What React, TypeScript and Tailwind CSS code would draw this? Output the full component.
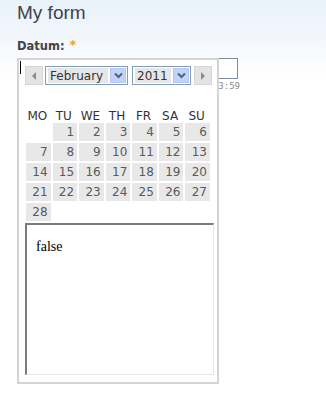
import React from 'react';

const days = ['MO', 'TU', 'WE', 'TH', 'FR', 'SA', 'SU'];
const cells: (number | null)[] = [null, ...Array.from({ length: 28 }, (_, i) => i + 1)];

function NavButton({ dir }: { dir: 'prev' | 'next' }) {
  return (
    <div className="w-[18px] h-[19px] bg-[#e4e4e4] border border-[#d6d6d6] flex items-center justify-center">
      <svg width="6" height="8" viewBox="0 0 6 8">
        {dir === 'prev' ? <polygon points="5,0 5,8 1,4" fill="#8c8c8c" /> : <polygon points="1,0 1,8 5,4" fill="#8c8c8c" />}
      </svg>
    </div>
  );
}

function FakeSelect({ label, width }: { label: string; width: string }) {
  return (
    <div className={`${width} h-[19px] border border-[#7f9db9] bg-white flex items-center pl-[2px] pr-[1px] gap-[2px]`}>
      <div className="flex-1 h-[15px] bg-[#e6e6e6] flex items-center pl-[2px] text-[12px] text-[#333] leading-none">{label}</div>
      <div className="w-[16px] h-[15px] bg-[#c3d3f6] border border-[#b4c6ee] flex items-center justify-center">
        <svg width="9" height="7" viewBox="0 0 9 7">
          <polyline points="1,1.5 4.5,5 8,1.5" fill="none" stroke="#4d6185" strokeWidth="2" />
        </svg>
      </div>
    </div>
  );
}

export default function App() {
  return (
    <div
      className="w-[326px] h-[410px] bg-[linear-gradient(to_bottom,#e9f1f9_0px,#f6f9fd_50px,#ffffff_80px)] text-[#444] overflow-hidden"
      style={{ fontFamily: '"DejaVu Sans", Verdana, sans-serif' }}
    >
      <div className="pl-[17px] pt-[1px]">
        <h1 className="text-[19px] leading-[24px] text-[#3f4448]" style={{ fontFamily: '"Liberation Sans", Arial, sans-serif' }}>
          My form
        </h1>
        <div className="mt-[13px] flex items-start gap-[5px] h-[20px]">
          <span className="text-[11.5px] font-bold text-[#444] leading-[16px]">Datum:</span>
          <span className="text-[13px] text-[#f0a020] font-bold leading-[14px]">*</span>
        </div>

        <div className="relative">
          <div className="w-[221px] h-[21px] border border-[#7f8d9b] bg-white" />
          <div className="w-[223px] flex justify-end text-[9px] text-[#888] leading-[12px] mt-[1px]" style={{ fontFamily: '"DejaVu Sans Mono", monospace' }}>
            2011-02-03 23:59
          </div>

          {/* popup calendar */}
          <div className="absolute left-0 top-0 w-[202px] h-[326px] bg-white border-2 border-[#d4d4d4] flex flex-col items-start pl-[6px] pt-[6px]">
            <div className="absolute left-[1px] top-[1px] w-[1px] h-[13px] bg-black" />
            <div className="flex items-center h-[19px]">
              <NavButton dir="prev" />
              <div className="w-[2px]" />
              <FakeSelect label="February" width="w-[83px]" />
              <div className="w-[4px]" />
              <FakeSelect label="2011" width="w-[59px]" />
              <div className="w-[3px]" />
              <NavButton dir="next" />
            </div>

            <div className="ml-[1px] mt-[24px] w-[184px] grid grid-cols-7 gap-x-[2px] h-[14px] items-center text-[12px] leading-none text-[#333]">
              {days.map((d) => (
                <div key={d} className="text-center pr-[2px]">{d}</div>
              ))}
            </div>

            <div className="ml-[1px] w-[184px] grid grid-cols-7 gap-[2px] text-[12px] text-[#5a5a5a]">
              {cells.map((c, i) => (
                <div
                  key={i}
                  className={`h-[18px] flex items-center justify-end pr-[3px] leading-none ${c ? 'bg-[#e8e8e8]' : ''}`}
                >
                  {c}
                </div>
              ))}
            </div>

            <div
              className="mt-[2px] w-[189px] h-[152px] border-t-2 border-l-2 border-t-[#7c7c74] border-l-[#7c7c74] border-b border-r border-b-[#e6e6e6] border-r-[#e6e6e6] bg-white pl-[9px] pt-[15px] text-[14px] text-black leading-none"
              style={{ fontFamily: '"Liberation Serif", "Times New Roman", serif' }}
            >
              false
            </div>
          </div>
        </div>
      </div>
    </div>
  );
}
